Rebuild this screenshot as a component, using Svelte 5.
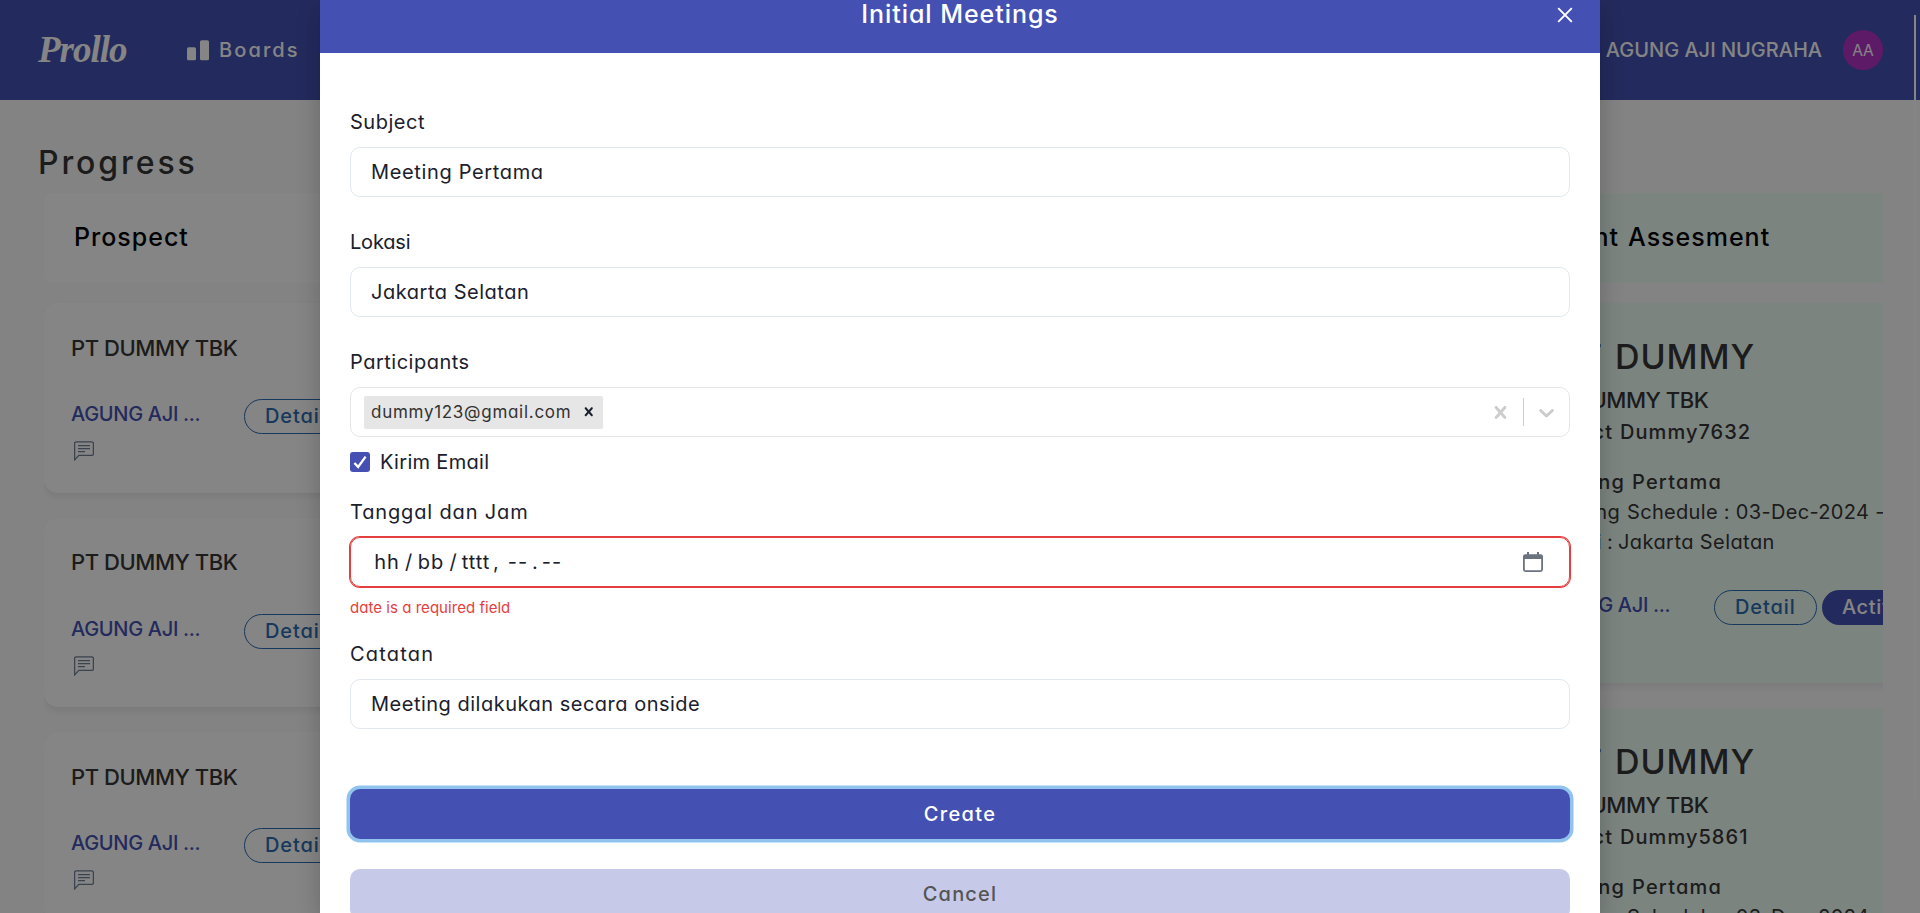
<script>
  const prospects = [1, 2, 3];
  const assessments = [
    { project: 'Dummy7632', date: '03-Dec-2024' },
    { project: 'Dummy5861', date: '03-Dec-2024' }
  ];
</script>

{#snippet actions()}
  <div class="row">
    <div class="owner">
      <span class="name">AGUNG AJI ...</span>
      <svg class="chat" viewBox="0 0 20 20" width="20" height="20">
        <path d="M2.2.8h15.6a1.6 1.6 0 0 1 1.6 1.6v10.4a1.6 1.6 0 0 1-1.6 1.6H4.8L.6 18.9V2.4A1.6 1.6 0 0 1 2.2.8z" />
        <path d="M4 4.6h12M4 7.6h12M4 10.6h7" />
      </svg>
    </div>
    <button class="pill outline">Detail</button>
    <button class="pill solid">Activity</button>
  </div>
{/snippet}

{#snippet field(label, value, cls)}
  <div class="field {cls}">
    <span class="label">{label}</span>
    <div class="input"><span class="value">{value}</span></div>
  </div>
{/snippet}

<div class="page">
  <header class="nav">
    <div class="brand">Prollo</div>
    <div class="boards">
      <svg viewBox="0 0 22 21" width="22" height="21">
        <rect x="0" y="7.3" width="9" height="13" rx="1.6" />
        <rect x="13" y="0.3" width="9" height="20" rx="1.6" />
      </svg>
      <span>Boards</span>
    </div>
    <div class="user">AGUNG AJI NUGRAHA</div>
    <div class="avatar">AA</div>
  </header>
  <div class="scrollbar"></div>

  <h1>Progress</h1>

  <main class="board">
    <section class="column">
      <div class="head prospect">Prospect</div>
      <div class="cards">
        {#each prospects as id (id)}
          <article class="card">
            <div class="company">PT DUMMY TBK</div>
            {@render actions()}
          </article>
        {/each}
      </div>
    </section>
    <section class="column"></section>
    <section class="column"></section>
    <section class="column mint">
      <div class="head assess"><span class="lead l-head">Client</span>Assesment</div>
      <div class="cards">
        {#each assessments as a (a.project)}
          <article class="card tall">
            <div class="big"><span class="lead l-big">PT</span>DUMMY</div>
            <div class="company">PT DUMMY TBK</div>
            <div class="project"><span class="lead l-project">Project</span>{a.project}</div>
            <div class="meeting"><span class="lead l-meeting">Meeting</span>Pertama</div>
            <div class="line sched"><span class="lead l-sched">Meeting</span>Schedule : {a.date} - 10:00</div>
            <div class="line place"><span class="lead l-place">Lokasi</span><span class="colon">:</span>Jakarta Selatan</div>
            {@render actions()}
          </article>
        {/each}
      </div>
    </section>
  </main>

  <div class="overlay">
    <div class="modal">
      <div class="modal-head">
        <span>Initial Meetings</span>
        <svg class="close" viewBox="0 0 16 16" width="16" height="16"><path d="M1.2 1.2l13.6 13.6M14.8 1.2L1.2 14.8" /></svg>
      </div>
      <div class="modal-body">
        {@render field('Subject', 'Meeting Pertama', 'subject')}
        {@render field('Lokasi', 'Jakarta Selatan', 'lokasi')}

        <div class="field participants">
          <span class="label">Participants</span>
          <div class="input select">
            <div class="tag">
              <span class="mail">dummy123@gmail.com</span>
              <svg viewBox="0 0 20 20" width="17.5" height="17.5"><path d="M14.348 14.849c-0.469 0.469-1.229 0.469-1.697 0l-2.651-3.030-2.651 3.029c-0.469 0.469-1.229 0.469-1.697 0-0.469-0.469-0.469-1.229 0-1.697l2.758-3.15-2.759-3.152c-0.469-0.469-0.469-1.228 0-1.697s1.228-0.469 1.697 0l2.652 3.031 2.651-3.031c0.469-0.469 1.228-0.469 1.697 0s0.469 1.229 0 1.697l-2.758 3.152 2.758 3.15c0.469 0.469 0.469 1.229 0 1.698z" /></svg>
            </div>
            <div class="indicators">
              <svg viewBox="0 0 20 20" width="25" height="25"><path d="M14.348 14.849c-0.469 0.469-1.229 0.469-1.697 0l-2.651-3.030-2.651 3.029c-0.469 0.469-1.229 0.469-1.697 0-0.469-0.469-0.469-1.229 0-1.697l2.758-3.15-2.759-3.152c-0.469-0.469-0.469-1.228 0-1.697s1.228-0.469 1.697 0l2.652 3.031 2.651-3.031c0.469-0.469 1.228-0.469 1.697 0s0.469 1.229 0 1.697l-2.758 3.152 2.758 3.15c0.469 0.469 0.469 1.229 0 1.698z" /></svg>
              <span class="sep"></span>
              <svg viewBox="0 0 20 20" width="25" height="25"><path d="M4.516 7.548c0.436-0.446 1.043-0.481 1.576 0l3.908 3.747 3.908-3.747c0.533-0.481 1.141-0.446 1.574 0 0.436 0.445 0.408 1.197 0 1.615-0.406 0.418-4.695 4.502-4.695 4.502-0.217 0.223-0.502 0.335-0.787 0.335s-0.57-0.112-0.789-0.335c0 0-4.287-4.084-4.695-4.502s-0.436-1.17 0-1.615z" /></svg>
            </div>
          </div>
        </div>

        <div class="check">
          <span class="box"><svg viewBox="0 0 12 12" width="14" height="14"><path d="M1.2 6.8L4.4 10.2 10.8 1.4" /></svg></span>
          <span class="check-label">Kirim Email</span>
        </div>

        <div class="field date">
          <span class="label">Tanggal dan Jam</span>
          <div class="input invalid">
            <div class="segments">
              <span class="s-hh">hh</span><span class="s-sl">/</span><span class="s-bb">bb</span><span class="s-sl2">/</span><span class="s-yy">tttt</span><span class="s-comma">,</span><span class="s-dash">--</span><span class="s-dot">.</span><span class="s-dash">--</span>
            </div>
            <svg class="calendar" viewBox="0 0 20 20" width="20" height="20">
              <path d="M2.4 2.2H4V0h2v2.2h8V0h2v2.2h1.6A2.4 2.4 0 0 1 20 4.6v13a2.4 2.4 0 0 1-2.4 2.4H2.4A2.4 2.4 0 0 1 0 17.6v-13a2.4 2.4 0 0 1 2.4-2.4zM1.8 7v10.4c0 .5.4.9.9.9h14.6c.5 0 .9-.4.9-.9V7z" />
            </svg>
          </div>
          <span class="error">date is a required field</span>
        </div>

        {@render field('Catatan', 'Meeting dilakukan secara onside', 'note')}

        <button class="btn create">Create</button>
        <button class="btn cancel">Cancel</button>
      </div>
    </div>
  </div>
</div>

<style>
  :global(body) { margin: 0; overflow: hidden; }
  .page {
    position: relative; width: 1920px; height: 913px; overflow: hidden; background: #fcfcfc;
    font-family: Inter, "Liberation Sans", sans-serif; font-size: 20px; line-height: 30px;
    font-feature-settings: "cv11"; box-sizing: border-box;
  }
  .page * { box-sizing: border-box; }
  button { font: inherit; font-feature-settings: inherit; padding: 0; border: 0; }
  svg { display: block; flex: none; }

  .nav { height: 100px; background: #4451b2; color: #fff; display: flex; align-items: center; padding: 0 37px 0 38px; }
  .brand { width: 149px; font: italic bold 37px/50px "Liberation Serif", serif; letter-spacing: -1px; }
  .boards { display: flex; gap: 10px; align-items: center; font-weight: 500; letter-spacing: 2.1px; }
  .boards svg { fill: #fff; }
  .user { margin-left: auto; margin-right: 21px; font-weight: 500; white-space: nowrap; }
  .avatar { width: 40px; height: 40px; border-radius: 50%; background: #b132c6; text-align: center; font-size: 15.5px; line-height: 41px; }
  .scrollbar { position: absolute; left: 1914px; top: 15px; width: 2px; height: 787px; background: #fff; }

  h1 { margin: 40px 0 7px 38px; font-size: 32px; line-height: 46px; font-weight: 500; letter-spacing: 2.9px; color: #363636; }
  .board { width: 1839px; height: 720px; margin-left: 44px; overflow: hidden; display: flex; gap: 20px; }
  .column { flex: none; width: 470px; display: flex; flex-direction: column; gap: 20px; }
  .head { flex: none; height: 90px; border-radius: 8px; background: #fff; padding-left: 30px; line-height: 89px; font-size: 25px; font-weight: 500; letter-spacing: 1px; color: #000; }
  .cards { flex: none; display: flex; flex-direction: column; gap: 25px; }
  .card { height: 189.5px; border-radius: 14px; background: #fff; padding: 27.5px 0 0 27px; color: #363636; box-shadow: 0 4px 7px rgba(0, 0, 0, 0.08); white-space: nowrap; }
  .card.tall { height: 380px; }
  .mint .card { padding-left: 28px; }
  .mint .head, .mint .card { background: #edfdf6; }
  .mint .head, .mint .card { border-radius: 0; }
  .company { font-size: 22px; line-height: 34px; font-weight: 500; letter-spacing: -0.45px; }
  .row { display: flex; align-items: flex-start; margin-top: 34.5px; margin-left: -27px; }
  .tall .row { margin-top: 33.5px; margin-left: -28px; }
  .owner { width: 200px; padding-left: 27px; }
  .name { display: block; font-weight: 500; color: #4451b2; letter-spacing: -0.3px; }
  .chat { margin: 12px 0 0 3px; fill: none; stroke: #718096; stroke-width: 1.3; }
  .pill { flex: none; height: 35px; border-radius: 18px; line-height: 33px; font-weight: 500; text-align: left; }
  .outline { width: 103px; border: 1px solid #2b6cb0; background: transparent; color: #2b6cb0; padding-left: 20px; letter-spacing: 0.9px; }
  .solid { width: 117px; margin-left: 5px; background: #4451b2; color: #fff; padding-left: 20px; line-height: 35px; letter-spacing: 0.6px; }

  .lead { display: inline-flex; justify-content: flex-end; vertical-align: baseline; }
  .l-head { width: 75px; margin-right: 9px; }
  .l-big { width: 61px; margin-right: 12px; }
  .l-project { width: 71px; margin-right: 7px; }
  .l-meeting { width: 83px; margin-right: 7px; }
  .l-sched { width: 78px; margin-right: 7px; }
  .l-place { width: 60px; margin-right: 5px; }
  .colon { display: inline-block; width: 11px; }
  .big { font-size: 34px; line-height: 52px; font-weight: 500; letter-spacing: 0.93px; }
  .project { font-weight: 500; letter-spacing: 1.05px; }
  .meeting { margin-top: 20px; font-weight: 500; letter-spacing: 1.2px; }
  .sched { letter-spacing: 0.32px; }
  .place { letter-spacing: 0.42px; }

  .overlay { position: absolute; inset: 0; background: rgba(0, 0, 0, 0.48); display: flex; justify-content: center; }
  .modal { width: 1280px; height: 913px; background: #fff; color: #1a202c; box-shadow: 0 8px 22px rgba(0, 0, 0, 0.22); }
  .modal-head { position: relative; height: 53px; background: #4451b2; color: #fff; text-align: center; font-size: 25px; line-height: 28px; font-weight: 500; letter-spacing: 0.95px; }
  .close { position: absolute; right: 27px; top: 7px; fill: none; stroke: #fff; stroke-width: 1.9; }
  .modal-body { padding: 54px 30px 0; display: flex; flex-direction: column; }
  .field { display: flex; flex-direction: column; gap: 10px; }
  .input { height: 50px; border: 1px solid #e2e8f0; border-radius: 10px; display: flex; align-items: center; padding: 0 20px; }
  .subject .label { letter-spacing: 0.53px; }
  .subject .value { letter-spacing: 0.65px; }
  .lokasi { margin-top: 30px; }
  .lokasi .label { letter-spacing: -0.2px; }
  .lokasi .value { letter-spacing: 0.52px; }
  .participants { margin-top: 30px; }
  .participants .label { letter-spacing: 0.5px; }
  .select { border-color: #e5e5e5; padding: 0 0 0 13px; }
  .tag { width: 239px; height: 33px; background: #e6e6e6; border-radius: 2px; display: flex; align-items: center; justify-content: space-between; padding: 0 6px 0 7px; }
  .mail { font-size: 17px; color: #333; letter-spacing: 0.72px; }
  .tag svg { fill: #1a202c; }
  .indicators { margin-left: auto; display: flex; align-items: center; gap: 10px; padding-right: 10px; }
  .indicators svg { fill: #ccc; }
  .sep { width: 1px; height: 28px; background: #ccc; }
  .check { display: flex; align-items: center; gap: 10px; height: 30px; margin-top: 10px; }
  .box { width: 20px; height: 20px; border-radius: 3px; background: #4451b2; display: flex; align-items: center; justify-content: center; }
  .box path { fill: none; stroke: #fff; stroke-width: 2; }
  .check-label { letter-spacing: 0.32px; }
  .date { margin-top: 20px; }
  .date .label { letter-spacing: 0.85px; }
  .invalid { border-color: #e53e3e; box-shadow: 0 0 0 1px #e53e3e; padding-left: 23px; justify-content: space-between; padding-right: 26px; }
  .segments { display: flex; text-align: center; }
  .s-hh { width: 26px; letter-spacing: 1px; }
  .s-sl { width: 17px; }
  .s-bb { width: 28px; letter-spacing: 1px; }
  .s-sl2 { width: 16px; }
  .s-yy { width: 30px; letter-spacing: 0.9px; }
  .s-comma { width: 10px; margin-right: 5px; }
  .s-dash { width: 24px; letter-spacing: 1px; }
  .s-dot { width: 10px; }
  .calendar { fill: #6b7280; fill-rule: evenodd; }
  .error { font-size: 15px; line-height: 22px; color: #e53e3e; letter-spacing: 0.04px; }
  .note { margin-top: 20px; }
  .note .label { letter-spacing: 1.2px; }
  .note .value { letter-spacing: 0.5px; }
  .btn { height: 50px; border-radius: 10px; font-weight: 500; text-align: center; flex: none; }
  .create { margin-top: 60px; background: #4451b2; color: #fff; letter-spacing: 1.35px; box-shadow: 0 0 0 3.5px #90c4ee; }
  .cancel { margin-top: 30px; background: #c7c9e8; color: #555; letter-spacing: 1.2px; }
</style>
